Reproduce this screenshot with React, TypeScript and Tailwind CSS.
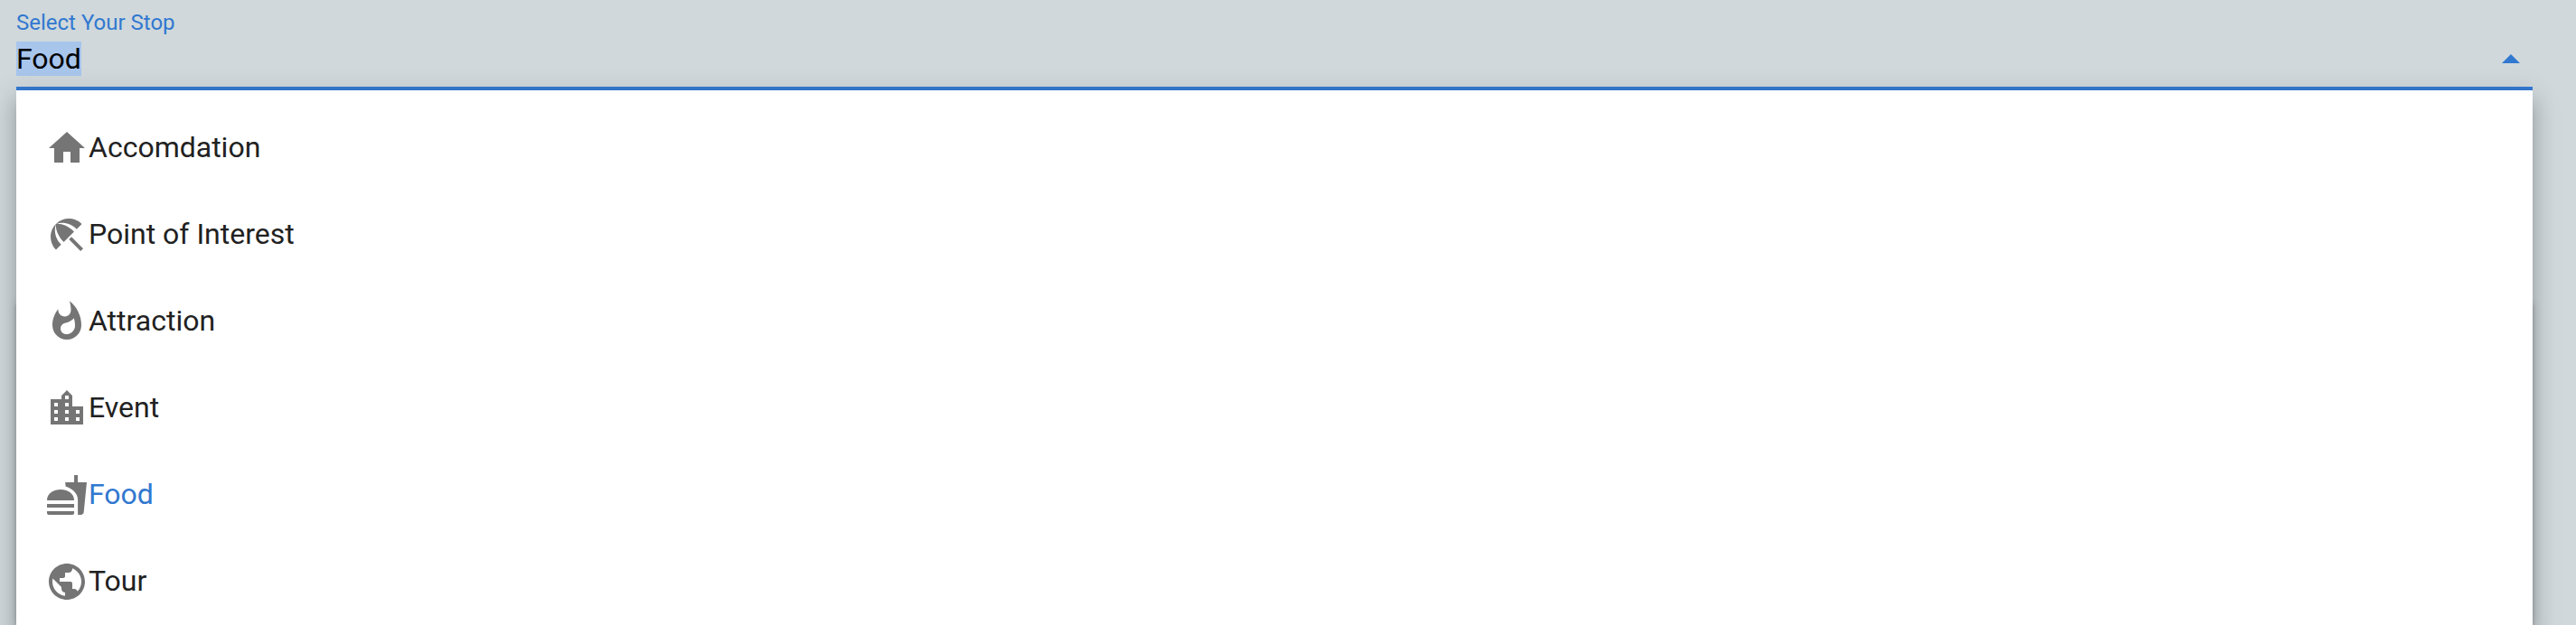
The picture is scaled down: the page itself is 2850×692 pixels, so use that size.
import type { IconType } from "react-icons";
import {
  MdBeachAccess,
  MdFastfood,
  MdHome,
  MdLocationCity,
  MdPublic,
  MdWhatshot,
} from "react-icons/md";

type Stop = { name: string; Icon: IconType };

const stops: Stop[] = [
  { name: "Accomdation", Icon: MdHome },
  { name: "Point of Interest", Icon: MdBeachAccess },
  { name: "Attraction", Icon: MdWhatshot },
  { name: "Event", Icon: MdLocationCity },
  { name: "Food", Icon: MdFastfood },
  { name: "Tour", Icon: MdPublic },
];

const selected = "Food";

function Field() {
  return (
    <div className="flex h-[100px] flex-col border-b-4 border-[#347bd4] pt-[11px]">
      <label className="h-[35px] text-[24px] leading-[28px] text-[#3178d0]">
        Select Your Stop
      </label>
      <div className="flex h-[38px] items-center justify-between pr-[14px]">
        <span className="bg-[#a8c5ec] text-[32px] leading-[38px] text-black">
          {selected}
        </span>
        <svg className="h-[10px] w-[20px]" viewBox="0 0 20 10" fill="#3178d0">
          <path d="M0 10 10 0l10 10z" />
        </svg>
      </div>
    </div>
  );
}

function Option({ name, Icon }: Stop) {
  return (
    <li
      className={`flex h-[96px] items-center px-[32px] text-[32px] leading-[38px] ${
        name === selected ? "text-[#3178d0]" : "text-[#212121]"
      }`}
    >
      <Icon className="size-[48px] shrink-0 text-[#757575]" />
      <span className="pb-[2px]">{name}</span>
    </li>
  );
}

export default function App() {
  return (
    <div className="relative h-[692px] overflow-hidden bg-[#d0d8db] pr-[48px] pl-[18px] font-[Roboto,sans-serif] antialiased">
      <div className="absolute top-[333px] right-[48px] left-[18px] h-[355px] shadow-[0_6px_2px_-4px_rgba(0,0,0,0.2),0_4px_4px_0_rgba(0,0,0,0.14),0_2px_10px_0_rgba(0,0,0,0.12)]" />
      <Field />
      <ul className="relative bg-white py-[16px] shadow-[0_10px_10px_-6px_rgba(0,0,0,0.2),0_16px_20px_2px_rgba(0,0,0,0.14),0_6px_28px_4px_rgba(0,0,0,0.12)]">
        {stops.map((stop) => (
          <Option key={stop.name} {...stop} />
        ))}
      </ul>
    </div>
  );
}
